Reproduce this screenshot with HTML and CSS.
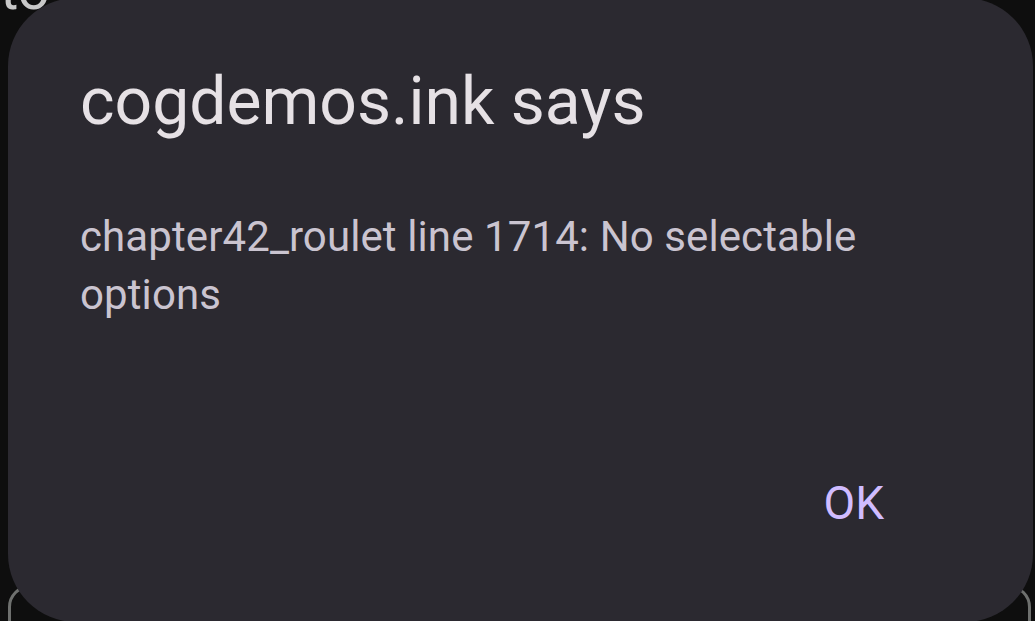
FILE: index.html
```html
<!DOCTYPE html>
<html lang="en">
<head>
  <meta charset="UTF-8">
  <title>cogdemos.ink says</title>
  <link rel="stylesheet" href="styles.css">
</head>
<body>

  <div class="page">
    <p class="page-text">to</p>
    <div class="page-box"></div>
  </div>

  <div class="dialog">
    <h2 class="dialog-title">cogdemos.ink says</h2>
    <p class="dialog-message">chapter42_roulet line 1714: No selectable options</p>
    <div class="dialog-actions">
      <button class="dialog-button">OK</button>
    </div>
  </div>

</body>
</html>
```

FILE: styles.css
```css
html, body {
  margin: 0;
  height: 100%;
  overflow: hidden;
}

body {
  background: #0e0e0e;
  font-family: Roboto, "Noto Sans", sans-serif;
}

.page {
  height: 100%;
  display: flex;
  flex-direction: column;
  justify-content: space-between;
  overflow: hidden;
}

.page-text {
  margin: -38px 0 0 0;
  font-size: 56px;
  line-height: 56px;
  color: #c8c8c8;
}

.page-box {
  flex-shrink: 0;
  margin: 0 4px -60px 8px;
  height: 90px;
  border: 3px solid #6e706e;
  border-radius: 22px;
}

.dialog {
  position: absolute;
  left: 8px;
  top: -2px;
  width: 1025px;
  height: 624px;
  box-sizing: border-box;
  padding: 68px 149px 0 72px;
  background: #2b2930;
  border-radius: 68px;
  display: flex;
  flex-direction: column;
}

.dialog-title {
  margin: 0;
  font-size: 66px;
  font-weight: 400;
  line-height: 72px;
  color: #e6e1e5;
}

.dialog-message {
  margin: 70px 0 0 0;
  font-size: 42px;
  line-height: 58px;
  letter-spacing: 0.1px;
  color: #cac4d0;
}

.dialog-actions {
  margin-top: auto;
  margin-bottom: 94px;
  display: flex;
  justify-content: flex-end;
}

.dialog-button {
  padding: 0;
  border: none;
  background: none;
  font-family: Roboto, "Noto Sans", sans-serif;
  font-size: 46px;
  font-weight: 400;
  line-height: 50px;
  color: #d0bcff;
}
```
